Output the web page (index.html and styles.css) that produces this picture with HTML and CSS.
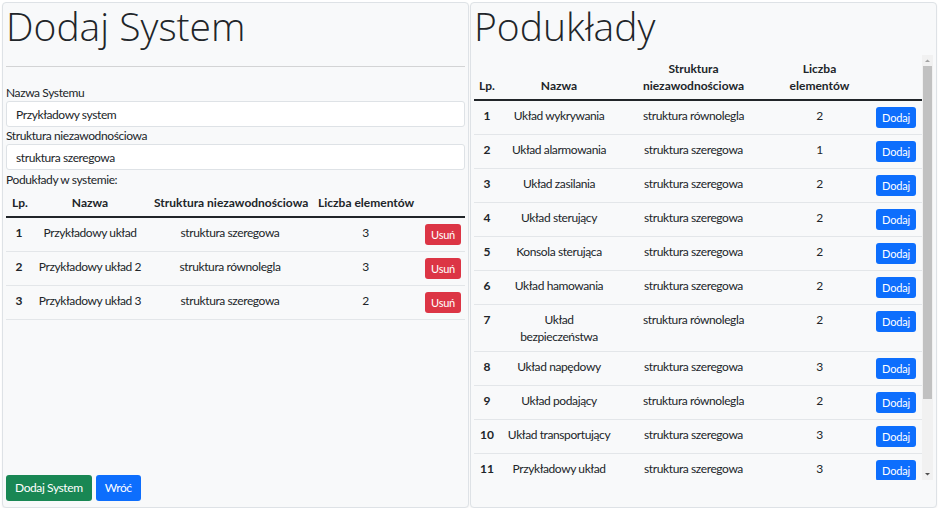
FILE: index.html
```html
<!DOCTYPE html>
<html lang="pl">
<head>
<meta charset="utf-8">
<title>Dodaj System</title>
<link rel="stylesheet" href="styles.css">
</head>
<body>
<main class="page">
  <section class="card card-left">
    <h1 class="title">Dodaj System</h1>
    <hr class="divider">
    <label class="label" for="name">Nazwa Systemu</label>
    <input class="input" id="name" type="text" value="Przykładowy system">
    <label class="label" for="struct">Struktura niezawodnościowa</label>
    <input class="input" id="struct" type="text" value="struktura szeregowa">
    <div class="label label-sub">Podukłady w systemie:</div>
    <table class="tbl">
      <colgroup>
        <col class="l-lp"><col class="l-name"><col class="l-struct"><col class="l-count"><col class="l-act">
      </colgroup>
      <thead>
        <tr><th>Lp.</th><th>Nazwa</th><th>Struktura niezawodnościowa</th><th>Liczba elementów</th><th></th></tr>
      </thead>
      <tbody>
        <tr><th>1</th><td>Przykładowy układ</td><td>struktura szeregowa</td><td>3</td><td><button class="btn-sm danger">Usuń</button></td></tr>
        <tr><th>2</th><td>Przykładowy układ 2</td><td>struktura równolegla</td><td>3</td><td><button class="btn-sm danger">Usuń</button></td></tr>
        <tr><th>3</th><td>Przykładowy układ 3</td><td>struktura szeregowa</td><td>2</td><td><button class="btn-sm danger">Usuń</button></td></tr>
      </tbody>
    </table>
    <div class="actions">
      <button class="btn success">Dodaj System</button>
      <button class="btn primary">Wróć</button>
    </div>
  </section>

  <section class="card card-right">
    <h1 class="title">Podukłady</h1>
    <div class="scroll">
      <div class="scroll-view">
        <table class="tbl tbl-right">
          <colgroup>
            <col class="r-lp"><col class="r-name"><col class="r-struct"><col class="r-count"><col class="r-act">
          </colgroup>
          <thead>
            <tr><th>Lp.</th><th>Nazwa</th><th>Struktura niezawodnościowa</th><th>Liczba elementów</th><th></th></tr>
          </thead>
          <tbody>
            <tr><th>1</th><td>Układ wykrywania</td><td>struktura równolegla</td><td>2</td><td><button class="btn-sm primary">Dodaj</button></td></tr>
            <tr><th>2</th><td>Układ alarmowania</td><td>struktura szeregowa</td><td>1</td><td><button class="btn-sm primary">Dodaj</button></td></tr>
            <tr><th>3</th><td>Układ zasilania</td><td>struktura szeregowa</td><td>2</td><td><button class="btn-sm primary">Dodaj</button></td></tr>
            <tr><th>4</th><td>Układ sterujący</td><td>struktura szeregowa</td><td>2</td><td><button class="btn-sm primary">Dodaj</button></td></tr>
            <tr><th>5</th><td>Konsola sterująca</td><td>struktura szeregowa</td><td>2</td><td><button class="btn-sm primary">Dodaj</button></td></tr>
            <tr><th>6</th><td>Układ hamowania</td><td>struktura szeregowa</td><td>2</td><td><button class="btn-sm primary">Dodaj</button></td></tr>
            <tr><th>7</th><td>Układ bezpieczeństwa</td><td>struktura równolegla</td><td>2</td><td><button class="btn-sm primary">Dodaj</button></td></tr>
            <tr><th>8</th><td>Układ napędowy</td><td>struktura szeregowa</td><td>3</td><td><button class="btn-sm primary">Dodaj</button></td></tr>
            <tr><th>9</th><td>Układ podający</td><td>struktura równolegla</td><td>2</td><td><button class="btn-sm primary">Dodaj</button></td></tr>
            <tr><th>10</th><td>Układ transportujący</td><td>struktura szeregowa</td><td>3</td><td><button class="btn-sm primary">Dodaj</button></td></tr>
            <tr><th>11</th><td>Przykładowy układ</td><td>struktura szeregowa</td><td>3</td><td><button class="btn-sm primary">Dodaj</button></td></tr>
          </tbody>
        </table>
      </div>
      <div class="scrollbar" aria-hidden="true">
        <span class="sb-btn">
          <svg width="11" height="11" viewBox="0 0 11 11"><polygon points="3,7 5.5,4.5 8,7" fill="#a3a3a3"/></svg>
        </span>
        <span class="sb-track"><span class="sb-thumb"></span></span>
        <span class="sb-btn">
          <svg width="11" height="11" viewBox="0 0 11 11"><polygon points="3,4 8,4 5.5,6.5" fill="#505050"/></svg>
        </span>
      </div>
    </div>
  </section>
</main>
</body>
</html>
```

FILE: styles.css
```css
* {
  box-sizing: border-box;
}

html,
body {
  margin: 0;
  background: #ffffff;
}

body {
  font-family: Lato, "Open Sans", sans-serif;
  font-size: 12px;
  line-height: 17px;
  letter-spacing: -0.4px;
  color: #212529;
}

.page {
  display: grid;
  grid-template-columns: 467px 467px;
  gap: 1px;
  padding: 2px 0 0 2px;
}

.card {
  height: 506px;
  background: #f8f9fa;
  border: 1px solid #dee2e6;
  border-radius: 4px;
  padding: 3px;
  display: flex;
  flex-direction: column;
  box-shadow: 0 1px 2px rgba(0, 0, 0, 0.06);
}

.title {
  margin: 0 0 10px;
  font-family: "Open Sans", sans-serif;
  font-size: 39px;
  line-height: 39px;
  font-weight: 300;
  letter-spacing: 0;
  white-space: nowrap;
}

.divider {
  margin: 11px 0 17px;
  border: 0;
  border-top: 1px solid #d3d4d5;
}

.label {
  display: block;
  line-height: 17px;
}

.label-sub {
  margin-top: 1px;
}

.input {
  display: block;
  width: 100%;
  height: 26px;
  padding: 0 9px;
  border: 1px solid #dee2e6;
  border-radius: 3px;
  background: #ffffff;
  color: #212529;
  font: inherit;
  font-size: 12px;
  line-height: 17px;
  letter-spacing: inherit;
  outline: none;
}

.tbl {
  width: 100%;
  border-collapse: collapse;
  table-layout: fixed;
}

.tbl th,
.tbl td {
  padding: 6px;
  text-align: center;
  vertical-align: top;
}

.tbl-right th,
.tbl-right td {
  padding-left: 5px;
  padding-right: 5px;
}

.tbl th {
  letter-spacing: 0;
  font-weight: 700;
}

.tbl thead th {
  padding-top: 6px;
  padding-bottom: 5px;
  vertical-align: bottom;
  border-bottom: 2px solid #212529;
}

.tbl-right thead th {
  padding-top: 5px;
}

.card-left .tbl thead th {
  white-space: nowrap;
}

.tbl tbody tr {
  border-bottom: 1px solid #e3e6e9;
}

.l-lp { width: 26px; }
.l-name { width: 116px; }
.l-struct { width: 164px; }
.l-count { width: 107px; }
.l-act { width: 46px; }

.r-lp { width: 26px; }
.r-name { width: 118px; }
.r-struct { width: 151px; }
.r-count { width: 101px; }
.r-act { width: 52px; }

.btn-sm {
  display: inline-block;
  height: 21px;
  padding: 0 6px;
  border: 0;
  border-radius: 3px;
  color: #ffffff;
  font-family: inherit;
  font-size: 11px;
  line-height: 21px;
  letter-spacing: -0.2px;
  cursor: pointer;
}

.btn {
  height: 26px;
  padding: 0 9px;
  border: 0;
  border-radius: 3px;
  color: #ffffff;
  font-family: inherit;
  font-size: 12px;
  line-height: 26px;
  letter-spacing: inherit;
  cursor: pointer;
}

.danger { background: #dc3545; }
.primary { background: #0d6efd; }
.success { background: #198754; }

.actions {
  margin-top: auto;
  margin-bottom: 3px;
  display: flex;
  gap: 4px;
}

.scroll {
  height: 425px;
  display: flex;
}

.scroll-view {
  flex: 1;
  overflow: hidden;
}

.scrollbar {
  width: 11px;
  flex: none;
  display: flex;
  flex-direction: column;
  background: #f1f1f1;
}

.sb-btn {
  display: block;
  height: 11px;
  flex: none;
}

.sb-btn svg {
  display: block;
}

.sb-track {
  flex: 1;
  display: block;
}

.sb-thumb {
  display: block;
  height: 333px;
  margin: 0 1px;
  background: #c1c1c1;
}
```
